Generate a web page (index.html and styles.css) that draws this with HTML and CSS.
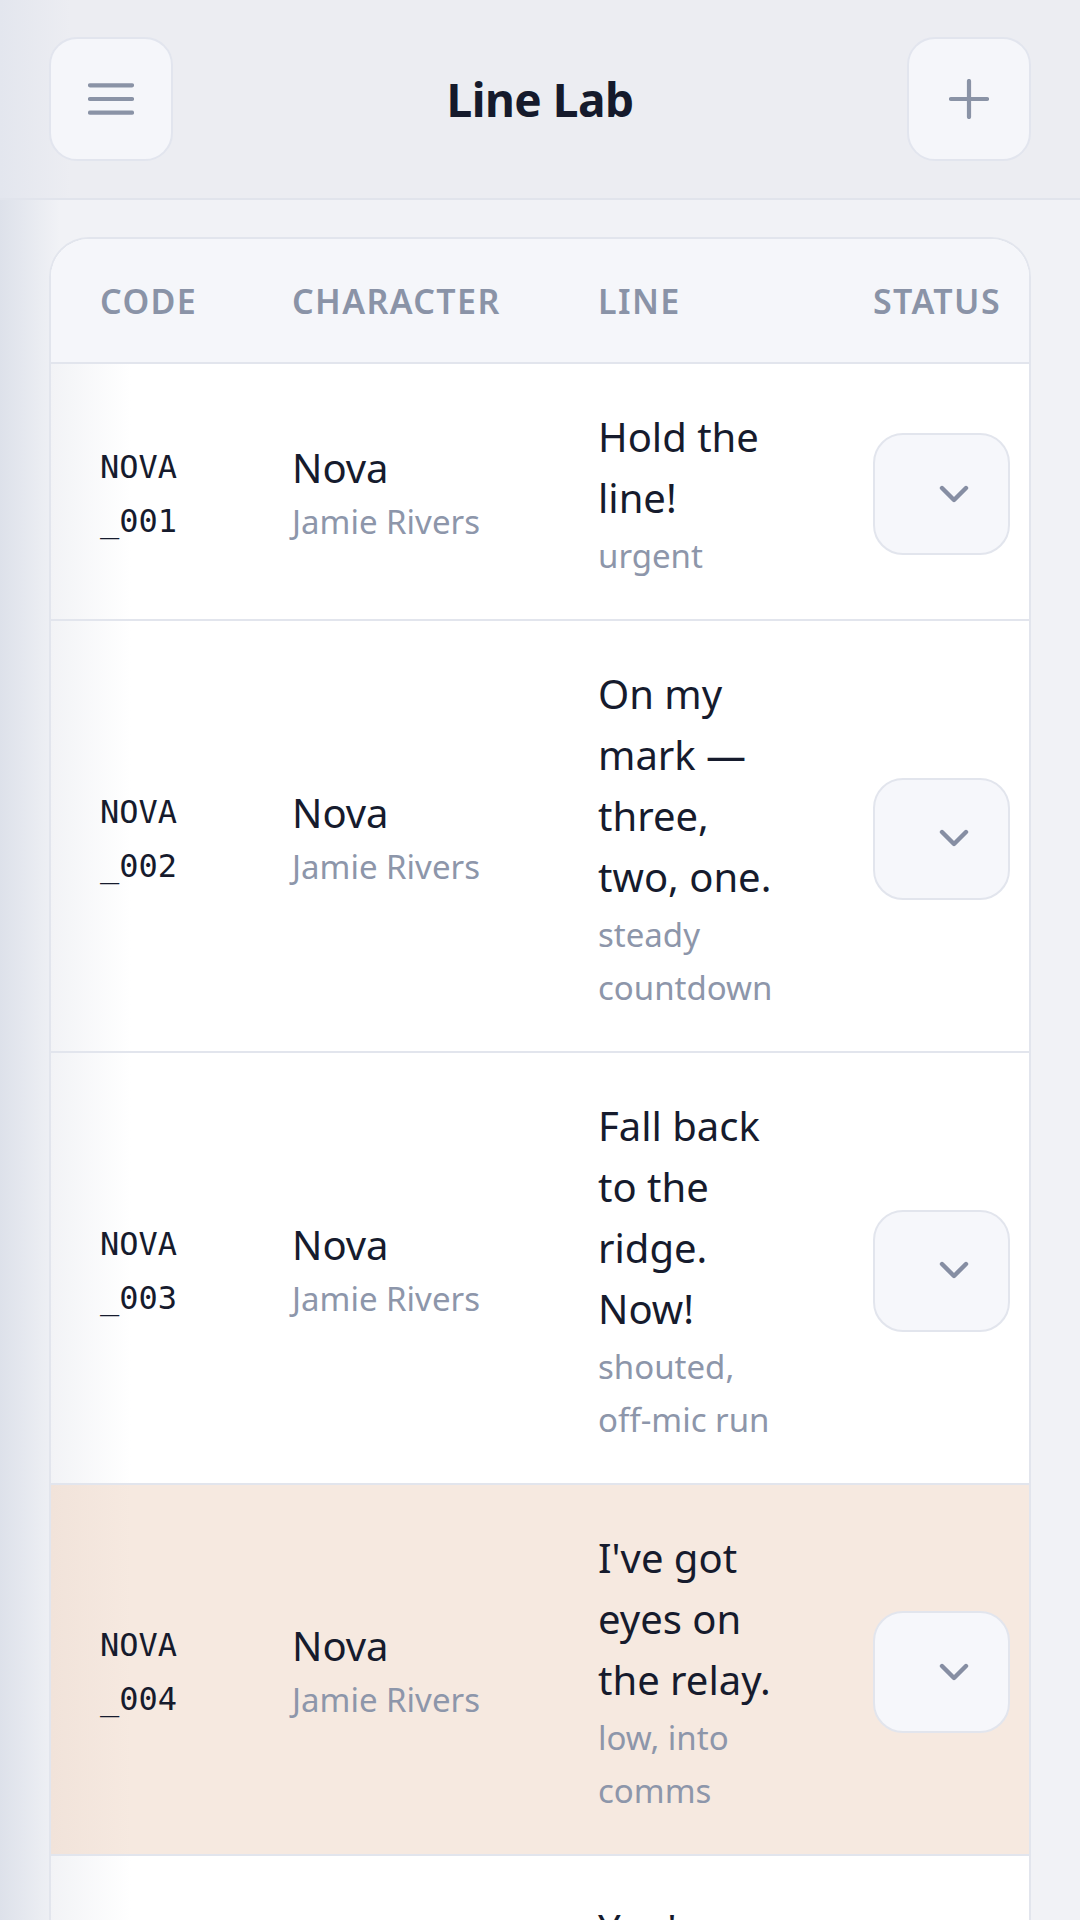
FILE: index.html
```html
<!DOCTYPE html>
<html>
<head>
	<meta charset="UTF-8">
	<meta name="viewport" content="width=device-width, initial-scale=1">
	<title>Line Lab</title>
	<link rel="stylesheet" href="styles.css">
</head>
<body>

	<!-- 上のバー -->
	<header class="topbar">
		<button class="icon-btn" aria-label="menu">
			<svg width="46" height="32" viewBox="0 0 46 32">
				<path d="M2 2.3H44M2 16H44M2 29.7H44" stroke="#8a93a6" stroke-width="4.2" stroke-linecap="round" fill="none"/>
			</svg>
		</button>
		<h1 class="title">Line Lab</h1>
		<button class="icon-btn" aria-label="add">
			<svg width="40" height="40" viewBox="0 0 40 40">
				<path d="M20 2V38M2 20H38" stroke="#8a93a6" stroke-width="4.2" stroke-linecap="round" fill="none"/>
			</svg>
		</button>
	</header>

	<main class="content">
		<div class="card">

			<div class="row head">
				<div>Code</div>
				<div>Character</div>
				<div>Line</div>
				<div>Status</div>
			</div>

			<div class="row">
				<div class="code">NOVA_001</div>
				<div class="who"><div class="name">Nova</div><div class="actor">Jamie Rivers</div></div>
				<div class="line"><div class="text">Hold the line!</div><div class="note">urgent</div></div>
				<div class="status"><button class="select"><svg width="30" height="19" viewBox="0 0 30 19"><path d="M3 3L15 15L27 3" stroke="#868ea3" stroke-width="4.4" stroke-linecap="round" stroke-linejoin="round" fill="none"/></svg></button></div>
			</div>

			<div class="row">
				<div class="code">NOVA_002</div>
				<div class="who"><div class="name">Nova</div><div class="actor">Jamie Rivers</div></div>
				<div class="line"><div class="text">On my mark — three, two, one.</div><div class="note">steady countdown</div></div>
				<div class="status"><button class="select"><svg width="30" height="19" viewBox="0 0 30 19"><path d="M3 3L15 15L27 3" stroke="#868ea3" stroke-width="4.4" stroke-linecap="round" stroke-linejoin="round" fill="none"/></svg></button></div>
			</div>

			<div class="row">
				<div class="code">NOVA_003</div>
				<div class="who"><div class="name">Nova</div><div class="actor">Jamie Rivers</div></div>
				<div class="line"><div class="text">Fall back to the ridge. Now!</div><div class="note">shouted, off-mic run</div></div>
				<div class="status"><button class="select"><svg width="30" height="19" viewBox="0 0 30 19"><path d="M3 3L15 15L27 3" stroke="#868ea3" stroke-width="4.4" stroke-linecap="round" stroke-linejoin="round" fill="none"/></svg></button></div>
			</div>

			<div class="row flagged">
				<div class="code">NOVA_004</div>
				<div class="who"><div class="name">Nova</div><div class="actor">Jamie Rivers</div></div>
				<div class="line"><div class="text">I've got eyes on the relay.</div><div class="note">low, into comms</div></div>
				<div class="status"><button class="select"><svg width="30" height="19" viewBox="0 0 30 19"><path d="M3 3L15 15L27 3" stroke="#868ea3" stroke-width="4.4" stroke-linecap="round" stroke-linejoin="round" fill="none"/></svg></button></div>
			</div>

			<div class="row">
				<div class="code">NOVA_005</div>
				<div class="who"><div class="name">Nova</div><div class="actor">Jamie Rivers</div></div>
				<div class="line"><div class="text">You're clear. Go, go, go!</div><div class="note">breathless</div></div>
				<div class="status"><button class="select"><svg width="30" height="19" viewBox="0 0 30 19"><path d="M3 3L15 15L27 3" stroke="#868ea3" stroke-width="4.4" stroke-linecap="round" stroke-linejoin="round" fill="none"/></svg></button></div>
			</div>

		</div>
	</main>

</body>
</html>
```

FILE: styles.css
```css
html, body {
	height: 100%;
	margin: 0;
	overflow: hidden;
}

body {
	font-family: "Noto Sans", "Open Sans", sans-serif;
	font-weight: 380;
	color: #161b2d;
	background-color: #f1f2f6;
	/* 左端のうすい影 */
	background-image: linear-gradient(90deg, #dde1ea 0, rgba(236, 238, 243, 0) 60px);
}

/* ここから上のバー */
.topbar {
	height: 198px;
	display: flex;
	align-items: center;
	justify-content: space-between;
	padding: 0 49px;
	background-color: #ecedf2;
	background-image: linear-gradient(90deg, #e3e6ee 0, rgba(236, 237, 242, 0) 70px);
	border-bottom: 2px solid #e1e4ec;
}

.icon-btn {
	width: 124px;
	height: 124px;
	display: flex;
	align-items: center;
	justify-content: center;
	padding: 0;
	background: #f5f6fa;
	border: 2px solid #e2e5ee;
	border-radius: 28px;
}

.title {
	margin: 0;
	font-size: 46px;
	font-weight: 700;
	letter-spacing: -0.5px;
	color: #151a2c;
}

/* ここから表 */
.content {
	padding: 37px 49px 0;
}

.card {
	background: #fff;
	border: 2px solid #e2e5ed;
	border-bottom: none;
	border-radius: 40px 40px 0 0;
	overflow: hidden;
}

.row {
	display: grid;
	grid-template-columns: 192px 306px 275px 1fr;
	align-items: center;
	padding: 42px 0 37px 49px;
	border-bottom: 2px solid #e2e5ed;
	background-color: #fff;
	background-image: linear-gradient(90deg, #f2f3f6 0, rgba(255, 255, 255, 0) 80px);
}

.row.head {
	height: 125px;
	box-sizing: border-box;
	padding-top: 0;
	padding-bottom: 0;
	background: #f5f6fa;
	font-size: 34px;
	font-weight: 600;
	letter-spacing: 1.4px;
	text-transform: uppercase;
	color: #8a93a7;
}

.row.flagged {
	background-color: #f6e9e0;
	background-image: linear-gradient(90deg, #f1e3da 0, rgba(246, 233, 224, 0) 80px);
}

.code {
	width: 90px;
	font-family: "DejaVu Sans Mono", monospace;
	font-weight: 400;
	font-size: 32px;
	line-height: 54px;
	word-break: break-all;
}

.name {
	font-size: 40px;
	line-height: 56px;
}

.actor {
	font-size: 33px;
	line-height: 52px;
	color: #8d96aa;
}

.line {
	width: 182px;
}

.line .text {
	font-size: 40px;
	line-height: 61px;
}

.line .note {
	margin-top: 1px;
	font-size: 33px;
	line-height: 53px;
	color: #8d96aa;
}

.select {
	width: 137px;
	height: 122px;
	display: flex;
	align-items: center;
	justify-content: center;
	padding: 0 0 0 25px;
	background: #f6f7fb;
	border: 2px solid #e2e5ed;
	border-radius: 30px;
}
```
